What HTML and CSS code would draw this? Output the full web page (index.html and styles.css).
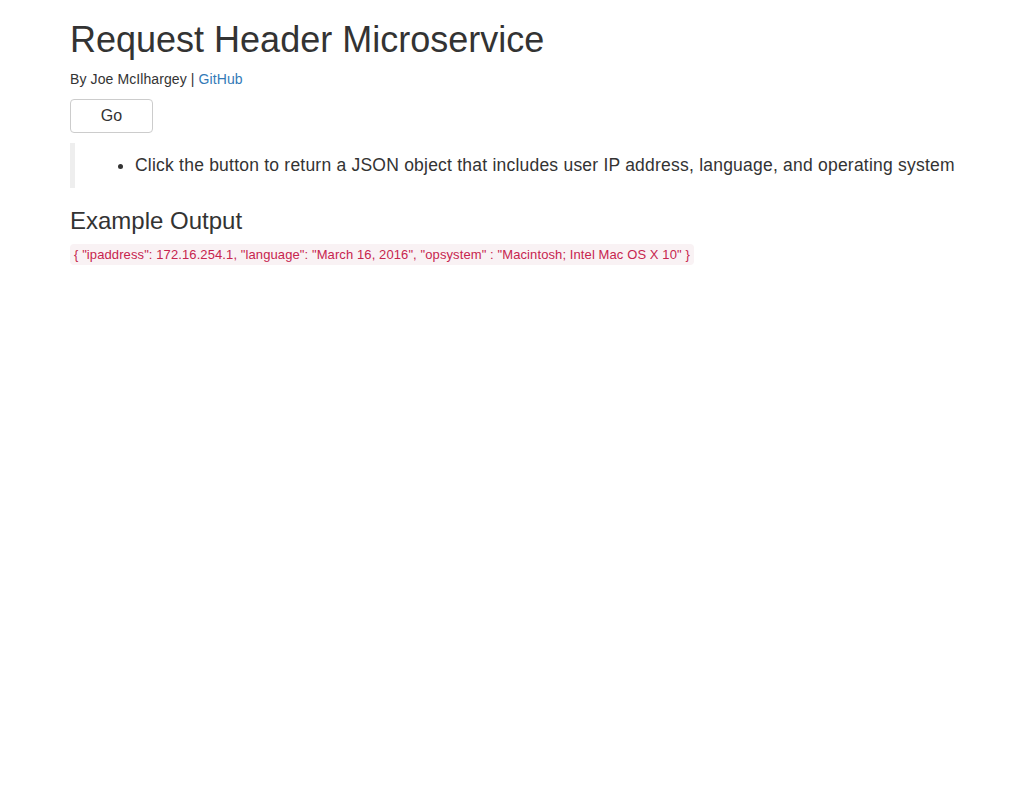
FILE: index.html
```html
<!DOCTYPE html>
<html lang="en">
<head>
<meta charset="utf-8">
<title>Request Header Microservice</title>
<link rel="stylesheet" href="styles.css">
</head>
<body>
<div class="page">
  <h1 class="title">Request Header Microservice</h1>
  <p class="byline">By Joe McIlhargey | <a href="#" class="link">GitHub</a></p>
  <div class="actions"><button class="btn" type="button">Go</button></div>
  <blockquote class="quote">
    <ul class="quote-list">
      <li>Click the button to return a JSON object that includes user IP address, language, and operating system</li>
    </ul>
  </blockquote>
  <h3 class="subtitle">Example Output</h3>
  <p class="output"><code class="code">{ "ipaddress": 172.16.254.1, "language": "March 16, 2016", "opsystem" : "Macintosh; Intel Mac OS X 10" }</code></p>
</div>
</body>
</html>
```
FILE: styles.css
```css
html, body {
  margin: 0;
  padding: 0;
  background: #fff;
}
body {
  font-family: "Liberation Sans", Arial, sans-serif;
  font-size: 14px;
  line-height: 1.42857143;
  color: #333;
}
.page {
  padding: 0 15px 0 70px;
}
.title {
  font-size: 36px;
  font-weight: 500;
  line-height: 1.1;
  margin: 20px 0 9px;
}
.byline {
  margin: 0 0 10px;
  letter-spacing: 0.1px;
}
.link {
  color: #337ab7;
  text-decoration: none;
}
.actions {
  margin: 0 0 10px;
}
.btn {
  display: inline-block;
  box-sizing: border-box;
  width: 83px;
  height: 34px;
  padding: 6px 12px;
  font-family: "Liberation Sans", Arial, sans-serif;
  font-size: 16px;
  line-height: 1.25;
  color: #333;
  background: #fff;
  border: 1px solid #ccc;
  border-radius: 4px;
}
.quote {
  margin: 0 0 20px;
  padding: 10px 20px;
  border-left: 5px solid #eee;
  font-size: 17.5px;
  letter-spacing: 0.22px;
}
.quote-list {
  margin: 0;
  padding-left: 40px;
}
.subtitle {
  font-size: 24px;
  font-weight: 500;
  line-height: 1.1;
  margin: 20px 0 10px;
}
.output {
  margin: 0 0 10px;
}
.code {
  font-family: "Liberation Sans", Arial, sans-serif;
  font-size: 13px;
  letter-spacing: 0.1px;
  padding: 3px 4px;
  color: #c7254e;
  background: #f9f2f4;
  border-radius: 4px;
}
```
